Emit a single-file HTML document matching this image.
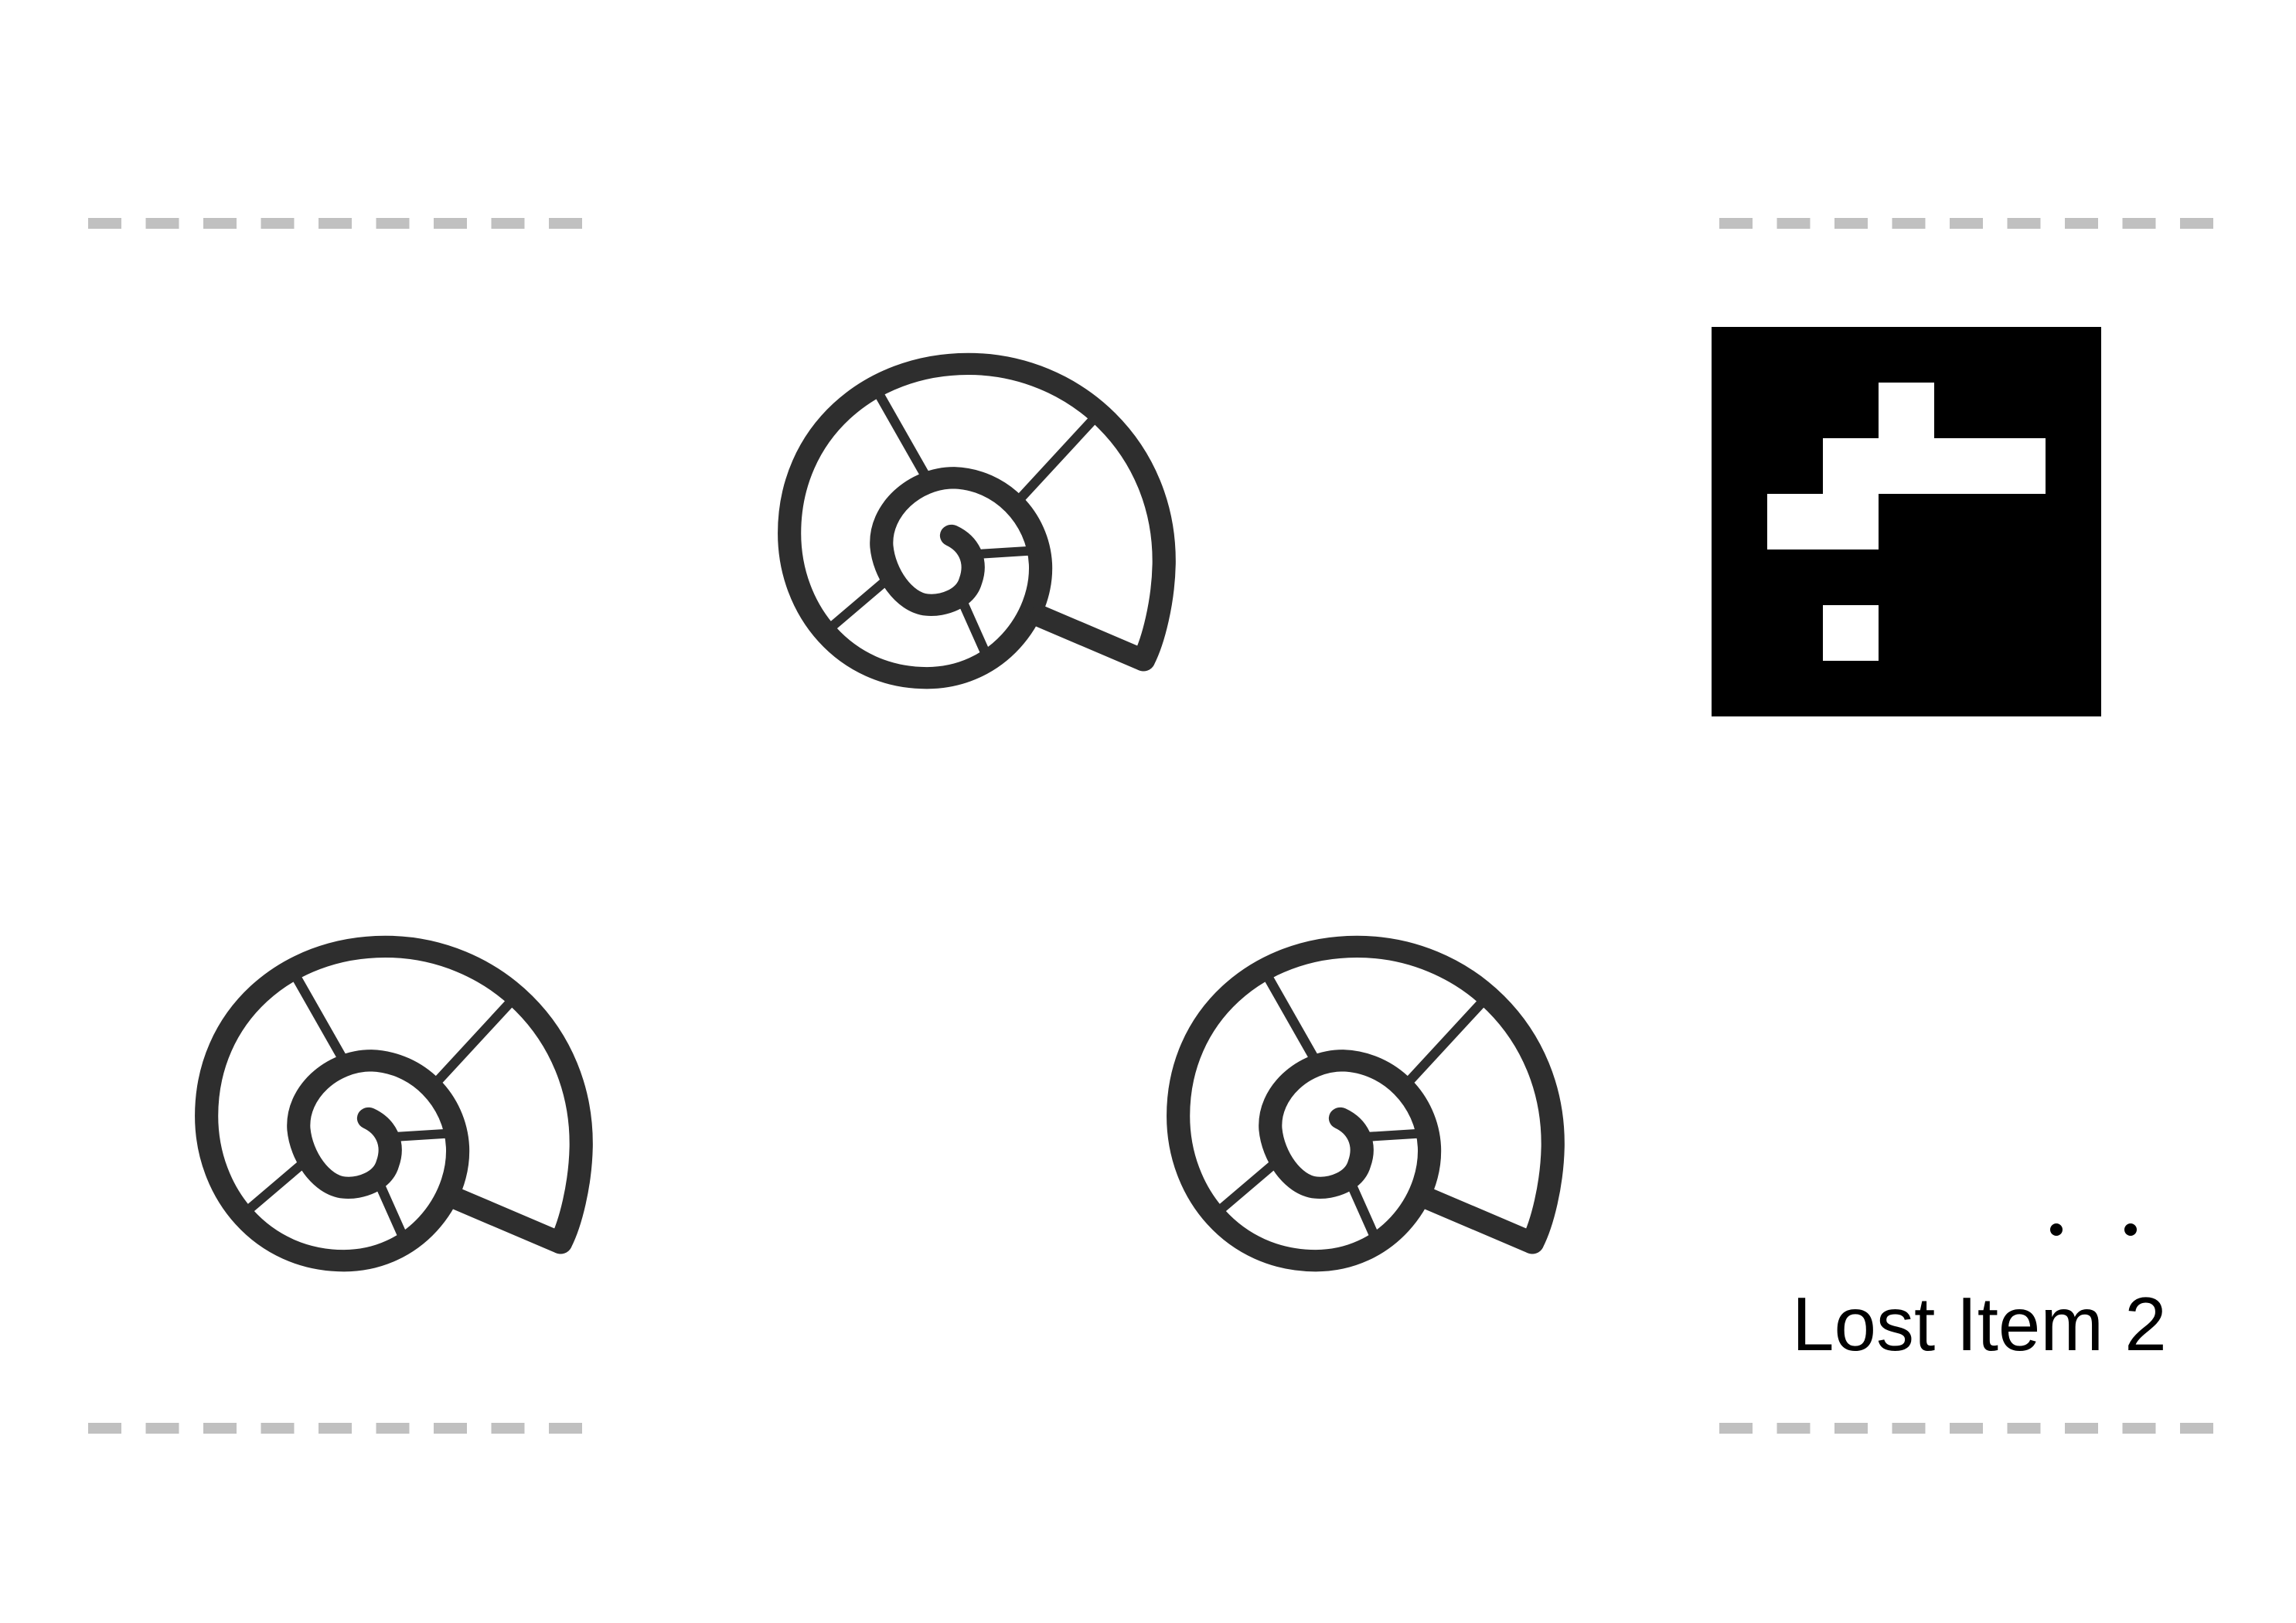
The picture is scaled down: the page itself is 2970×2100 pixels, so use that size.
<!DOCTYPE html>
<html><head><meta charset="utf-8"><style>
html,body{margin:0;padding:0;background:#fff;}
body{width:2970px;height:2100px;position:relative;overflow:hidden;}
.t{position:absolute;left:2318px;top:1658px;font-family:"Liberation Sans",sans-serif;font-size:98px;line-height:110px;color:#000;white-space:nowrap;}
</style></head><body>
<svg width="2970" height="2100" style="position:absolute;left:0;top:0">
<defs>
<g id="shell" fill="none" stroke="#2e2e2e" stroke-linecap="round" stroke-linejoin="round">
<g stroke-width="36" stroke-linecap="butt">
<path d="M415,218 L615,594"/>
<path d="M1224,316 L915,674"/>
<path d="M760,863 L1000,847"/>
<path d="M225,1170 L470,947"/>
<path d="M715,1011 L830,1287"/>
</g>
<path stroke-width="85" d="M690,789 C750,819 786,885 759,966 C741,1035 660,1065 600,1059 C516,1050 444,936 435,831 C426,690 555,564 699,564 C870,570 1005,720 1014,900 C1023,1110 855,1344 600,1344 C300,1344 99,1080 99,780 C99,390 390,120 750,120 C1140,120 1470,450 1464,900 C1461,1050 1425,1200 1389,1275"/>
<path stroke-width="85" d="M1389,1275 L1014,1104"/>
</g>
</defs>
<g transform="translate(986,431) scale(0.355,0.332)"><use href="#shell"/></g>
<g transform="translate(232,1185) scale(0.355,0.332)"><use href="#shell"/></g>
<g transform="translate(1489,1185) scale(0.355,0.332)"><use href="#shell"/></g>
<g fill="#c0c0c0">
<g id="dl">
<rect x="114" y="282" width="43" height="14"/><rect x="188.5" y="282" width="43" height="14"/><rect x="263" y="282" width="43" height="14"/><rect x="337.5" y="282" width="43" height="14"/><rect x="412" y="282" width="43" height="14"/><rect x="486.5" y="282" width="43" height="14"/><rect x="561" y="282" width="43" height="14"/><rect x="635.5" y="282" width="43" height="14"/><rect x="710" y="282" width="43" height="14"/>
</g>
<use href="#dl" transform="translate(2110,0)"/>
<use href="#dl" transform="translate(0,1559)"/>
<use href="#dl" transform="translate(2110,1559)"/>
</g>
<g transform="translate(-10,-2)">
<rect x="2224" y="425" width="504" height="504" fill="#000"/>
<g fill="#fff">
<rect x="2440" y="497" width="72" height="72"/>
<rect x="2368" y="569" width="288" height="72"/>
<rect x="2296" y="641" width="144" height="72"/>
<rect x="2368" y="785" width="72" height="72"/>
</g>
</g>
<circle cx="2660" cy="1591" r="8" fill="#000"/>
<circle cx="2756" cy="1591" r="8" fill="#000"/>
</svg>
<div class="t">Lost Item 2</div>
</body></html>
